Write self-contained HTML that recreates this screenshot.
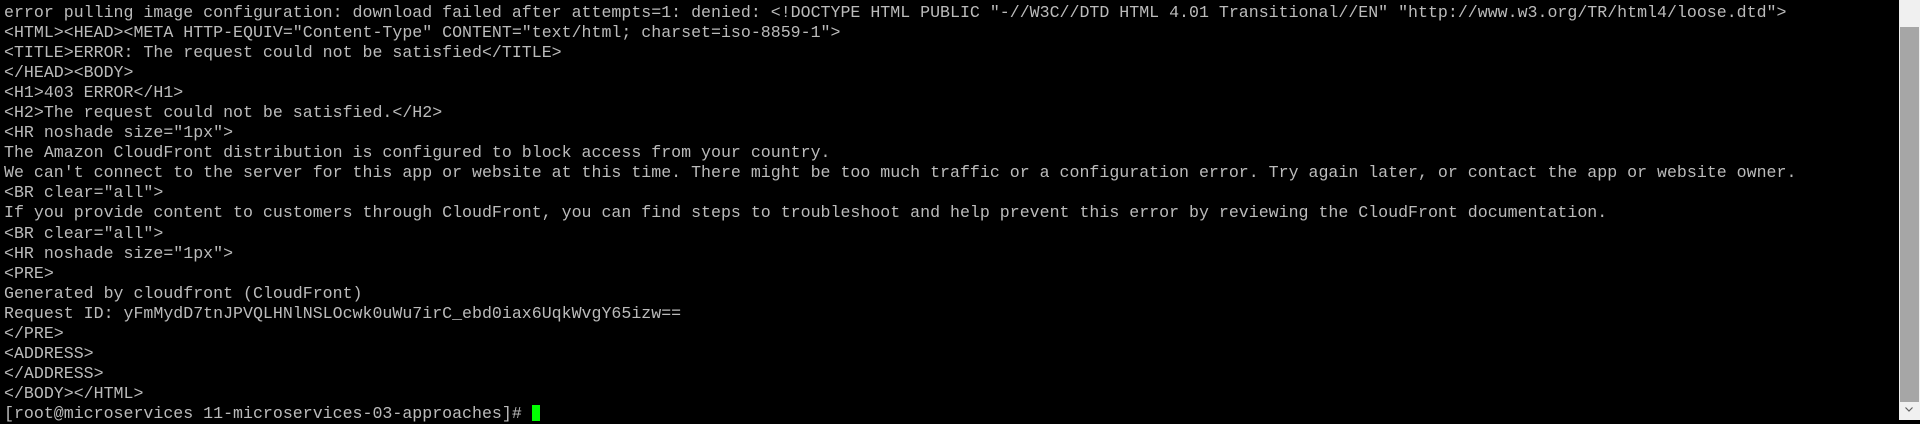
<!DOCTYPE html>
<html><head><style>
html,body{margin:0;padding:0;background:#000;width:1920px;height:420px;overflow:hidden}
pre{margin:0;position:absolute;left:4px;top:3px;font-family:"Liberation Mono","Courier New",monospace;font-size:16.6px;line-height:20.05px;color:#bbbbbb}
.cur{display:inline-block;width:8px;height:16px;background:#00ff00;vertical-align:-3px}
.sb{position:absolute;left:1899px;top:0;width:21px;height:420px;background:#f0f0f0}
.th{position:absolute;left:1900px;top:27px;width:19px;height:375px;background:#a6a6a6}
.ar{position:absolute;left:1905px;top:405px;width:8px;height:8px}
</style></head><body>
<pre>error pulling image configuration: download failed after attempts=1: denied: &lt;!DOCTYPE HTML PUBLIC "-//W3C//DTD HTML 4.01 Transitional//EN" "http://www.w3.org/TR/html4/loose.dtd"&gt;
&lt;HTML&gt;&lt;HEAD&gt;&lt;META HTTP-EQUIV="Content-Type" CONTENT="text/html; charset=iso-8859-1"&gt;
&lt;TITLE&gt;ERROR: The request could not be satisfied&lt;/TITLE&gt;
&lt;/HEAD&gt;&lt;BODY&gt;
&lt;H1&gt;403 ERROR&lt;/H1&gt;
&lt;H2&gt;The request could not be satisfied.&lt;/H2&gt;
&lt;HR noshade size="1px"&gt;
The Amazon CloudFront distribution is configured to block access from your country.
We can't connect to the server for this app or website at this time. There might be too much traffic or a configuration error. Try again later, or contact the app or website owner.
&lt;BR clear="all"&gt;
If you provide content to customers through CloudFront, you can find steps to troubleshoot and help prevent this error by reviewing the CloudFront documentation.
&lt;BR clear="all"&gt;
&lt;HR noshade size="1px"&gt;
&lt;PRE&gt;
Generated by cloudfront (CloudFront)
Request ID: yFmMydD7tnJPVQLHNlNSLOcwk0uWu7irC_ebd0iax6UqkWvgY65izw==
&lt;/PRE&gt;
&lt;ADDRESS&gt;
&lt;/ADDRESS&gt;
&lt;/BODY&gt;&lt;/HTML&gt;
[root@microservices 11-microservices-03-approaches]# <span class="cur"></span></pre>
<div class="sb"></div><div class="th"></div>
<svg class="ar" viewBox="0 0 8 8"><path d="M0.5 2.5 L4 6 L7.5 2.5" stroke="#606060" stroke-width="1.2" fill="none"/></svg>
</body></html>
